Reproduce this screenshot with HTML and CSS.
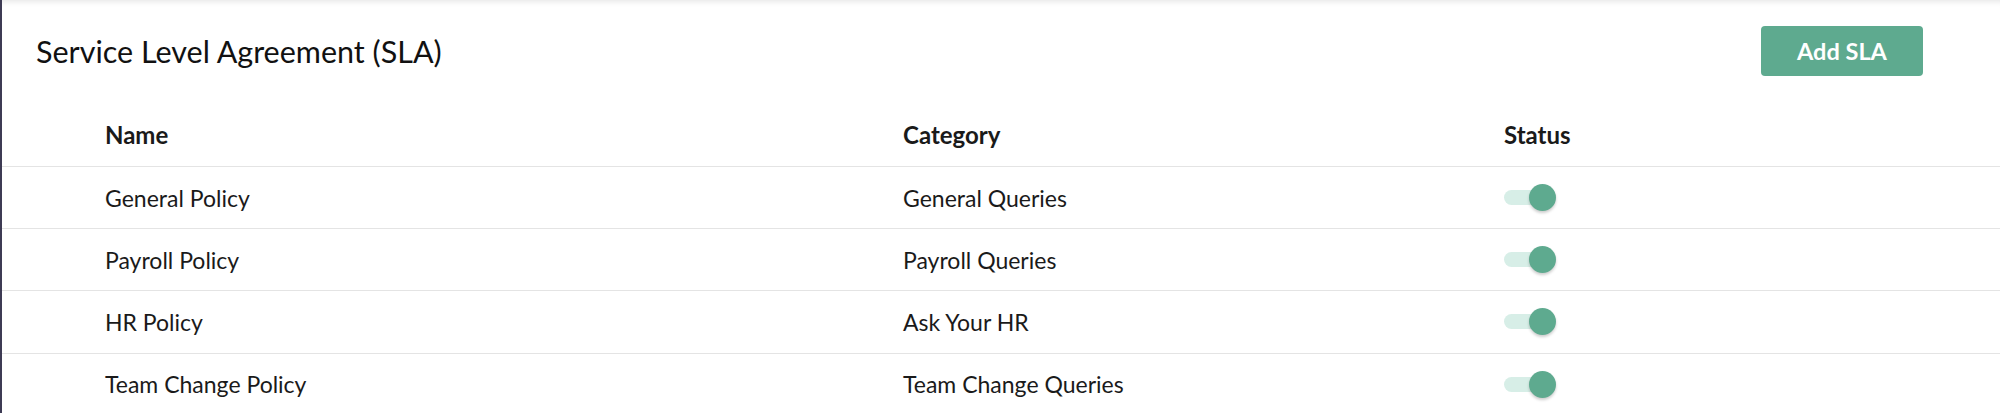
FILE: index.html
```html
<!DOCTYPE html>
<html>
	<head>
		<meta charset="UTF-8">
		<title>Service Level Agreement (SLA)</title>
		<link rel="stylesheet" href="styles.css">
	</head>
	<body>
		<div class="page">
			<div class="head">
				<h1>Service Level Agreement (SLA)</h1>
				<button class="btn-add">Add SLA</button>
			</div>
			<div class="table">
				<div class="row thead">
					<span>Name</span>
					<span>Category</span>
					<span>Status</span>
				</div>
				<div class="row">
					<span>General Policy</span>
					<span>General Queries</span>
					<span><i class="toggle on"></i></span>
				</div>
				<div class="row">
					<span>Payroll Policy</span>
					<span>Payroll Queries</span>
					<span><i class="toggle on"></i></span>
				</div>
				<div class="row">
					<span>HR Policy</span>
					<span>Ask Your HR</span>
					<span><i class="toggle on"></i></span>
				</div>
				<div class="row">
					<span>Team Change Policy</span>
					<span>Team Change Queries</span>
					<span><i class="toggle on"></i></span>
				</div>
			</div>
		</div>
	</body>
</html>
```

FILE: styles.css
```css
html,body{
	margin:0;
	padding:0;
	background:#fff;
}
body{
	font-family:Lato,"Open Sans",sans-serif;
	color:#1a1a1a;
}
.page{
	border-left:2px solid #3d3b54;
	min-height:413px;
	box-sizing:border-box;
	box-shadow:inset 0 7px 6px -6px rgba(0,0,0,.12);
}
.head{
	display:flex;
	align-items:center;
	justify-content:space-between;
	height:102px;
	padding:0 77px 0 34px;
}
.head h1{
	margin:0;
	font-size:30.5px;
	font-weight:400;
	color:#111;
}
.btn-add{
	width:162px;
	height:50px;
	border:0;
	border-radius:4px;
	background:#5eaa8f;
	color:#fff;
	font-family:Lato,sans-serif;
	font-weight:700;
	font-size:23.5px;
	cursor:pointer;
}
.table .row{
	display:grid;
	grid-template-columns:798px 601px 1fr;
	align-items:center;
	height:61.2px;
	padding-left:103px;
	border-bottom:1px solid #e4e4e4;
	font-size:23px;
}
.table .thead{
	height:64px;
	font-weight:700;
	font-size:24px;
}
.toggle{
	display:block;
	position:relative;
	width:44px;
	height:15px;
	border-radius:8px;
	background:#d7eee7;
}
.toggle.on:after{
	content:"";
	position:absolute;
	right:-8px;
	top:50%;
	width:27px;
	height:27px;
	margin-top:-13.5px;
	border-radius:50%;
	background:#5eaa8f;
	box-shadow:0 2px 3px rgba(0,0,0,.2);
}
```
